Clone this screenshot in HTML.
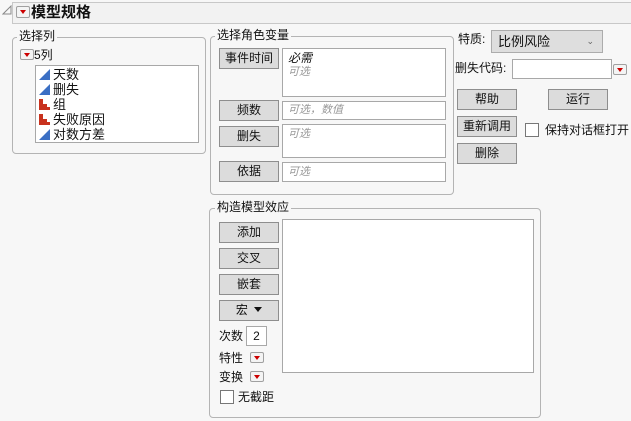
<!DOCTYPE html>
<html><head><meta charset="utf-8"><style>
*{box-sizing:border-box;margin:0;padding:0}
body{width:631px;height:421px;background:#f7f7f7;font-family:"Liberation Sans","Noto Sans CJK SC",sans-serif;font-size:12px;color:#111;position:relative;overflow:hidden}
.a{position:absolute;white-space:nowrap}
.grp{position:absolute;border:1px solid #b4b4b4;border-radius:4px}
.lg{position:absolute;background:#f7f7f7;padding:0 2px;font-size:12px;line-height:14px}
.btn{position:absolute;width:60px;height:21px;background:#dcdcdc;border:1px solid #8e8e8e;text-align:center;line-height:19px;font-size:12px}
.box{position:absolute;background:#fff;border:1px solid #a8a8a8}
.ph{color:#999;font-style:italic;font-size:11px}
.rb{position:absolute;width:14px;height:11px;border:1px solid #a0a0a0;border-radius:2px;background:#f4f4f4}
.rb:after{content:"";position:absolute;left:3px;top:3px;border-left:3.5px solid transparent;border-right:3.5px solid transparent;border-top:4px solid #c00}
.cb{position:absolute;width:14px;height:14px;border:1px solid #777;background:#fff}
.tri{display:inline-block;width:0;height:0;border-left:11px solid transparent;border-bottom:11px solid #3b6fc4;margin-right:3px;vertical-align:-1px}
.bar{display:inline-block;width:11px;height:11px;margin-right:3px;vertical-align:-1px;position:relative}
.bar i{position:absolute;bottom:0;background:#c8321e;width:4px}
</style></head><body>
<svg class="a" style="left:2px;top:5px" width="10" height="10"><path d="M1 9 L9 9 L9 1 Z" fill="none" stroke="#888" stroke-width="1"/></svg>
<div class="a" style="left:12px;top:2px;width:625px;height:22px;border:1px solid #c8c8c8;background:#f2f2f2"></div>
<div class="rb" style="left:16px;top:6px;width:14px;height:12px"></div>
<div class="a" style="left:31px;top:3px;font-size:15px;font-weight:bold;line-height:20px">模型规格</div>

<div class="grp" style="left:12px;top:37px;width:194px;height:117px"></div>
<div class="lg" style="left:17px;top:29px">选择列</div>
<div class="rb" style="left:20px;top:49px"></div>
<div class="a" style="left:34px;top:48px;line-height:14px">5列</div>
<div class="box" style="left:35px;top:65px;width:164px;height:78px;padding:1px 0 0 3px;line-height:15px;font-size:13px">
<div><span class="tri"></span>天数</div>
<div><span class="tri"></span>删失</div>
<div><span class="bar"><i style="left:0;height:11px"></i><i style="left:4px;height:6px"></i><i style="left:8px;height:3px;width:3px"></i></span>组</div>
<div><span class="bar"><i style="left:0;height:11px"></i><i style="left:4px;height:6px"></i><i style="left:8px;height:3px;width:3px"></i></span>失败原因</div>
<div><span class="tri"></span>对数方差</div>
</div>

<div class="grp" style="left:210px;top:36px;width:244px;height:159px"></div>
<div class="lg" style="left:215px;top:28px">选择角色变量</div>
<div class="btn" style="left:219px;top:48px">事件时间</div>
<div class="box" style="left:282px;top:48px;width:164px;height:49px;padding:2px 5px;line-height:14px"><div style="font-style:italic">必需</div><div class="ph">可选</div></div>
<div class="btn" style="left:219px;top:100px">频数</div>
<div class="box ph" style="left:282px;top:101px;width:164px;height:19px;padding:0 5px;line-height:17px">可选，数值</div>
<div class="btn" style="left:219px;top:126px">删失</div>
<div class="box ph" style="left:282px;top:124px;width:164px;height:34px;padding:2px 5px;line-height:14px">可选</div>
<div class="btn" style="left:219px;top:161px">依据</div>
<div class="box ph" style="left:282px;top:162px;width:164px;height:20px;padding:0 5px;line-height:18px">可选</div>

<div class="a" style="left:458px;top:31px;line-height:16px">特质:</div>
<div class="a" style="left:491px;top:30px;width:112px;height:23px;background:#dedede;border:1px solid #acacac;line-height:21px;padding-left:6px;font-size:13px">比例风险<span style="position:absolute;right:8px;top:0;font-size:9px;color:#666">&#8964;</span></div>
<div class="a" style="left:455px;top:60px;line-height:16px">删失代码:</div>
<div class="box" style="left:512px;top:59px;width:100px;height:20px"></div>
<div class="rb" style="left:613px;top:64px;width:14px;height:11px"></div>
<div class="btn" style="left:457px;top:89px">帮助</div>
<div class="btn" style="left:548px;top:89px">运行</div>
<div class="btn" style="left:457px;top:116px">重新调用</div>
<div class="cb" style="left:525px;top:123px"></div>
<div class="a" style="left:545px;top:122px;line-height:16px">保持对话框打开</div>
<div class="btn" style="left:457px;top:143px">删除</div>

<div class="grp" style="left:209px;top:208px;width:332px;height:210px"></div>
<div class="lg" style="left:215px;top:200px">构造模型效应</div>
<div class="btn" style="left:219px;top:222px">添加</div>
<div class="btn" style="left:219px;top:248px">交叉</div>
<div class="btn" style="left:219px;top:274px">嵌套</div>
<div class="btn" style="left:219px;top:300px">宏 <span style="display:inline-block;width:0;height:0;border-left:4px solid transparent;border-right:4px solid transparent;border-top:5px solid #111;vertical-align:2px;margin-left:3px"></span></div>
<div class="box" style="left:282px;top:219px;width:252px;height:154px"></div>
<div class="a" style="left:219px;top:328px;line-height:16px">次数</div>
<div class="box" style="left:246px;top:326px;width:21px;height:20px;text-align:center;line-height:18px">2</div>
<div class="a" style="left:219px;top:350px;line-height:16px">特性</div>
<div class="rb" style="left:250px;top:352px"></div>
<div class="a" style="left:219px;top:369px;line-height:16px">变换</div>
<div class="rb" style="left:250px;top:371px"></div>
<div class="cb" style="left:220px;top:390px"></div>
<div class="a" style="left:238px;top:389px;line-height:16px">无截距</div>
</body></html>
